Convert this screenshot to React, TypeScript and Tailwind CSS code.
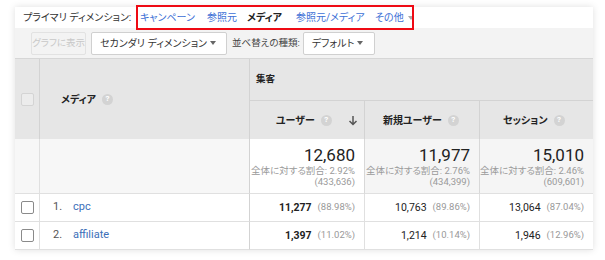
import React from 'react'

const Q = () => (
  <span className="inline-flex items-center justify-center w-[11px] h-[11px] rounded-full bg-[#d3d3d3] text-white text-[8px] font-bold leading-none ml-[6px]">?</span>
)

const Box = ({ light }: { light?: boolean }) => (
  <span className={`block w-[13px] h-[13px] rounded-[2px] border ${ light ? 'border-[#d4d4d4] bg-[#ececec]' : 'border-[#8a8a8a] bg-white' }`}/>
)

const Caret = () => <span className="inline-block ml-auto border-x-[3.5px] border-x-transparent border-t-[4px] border-t-[#666]"/>

const rows = [
  { n: '1.', name: 'cpc', v: [['11,277', '(88.98%)'], ['10,763', '(89.86%)'], ['13,064', '(87.04%)']] },
  { n: '2.', name: 'affiliate', v: [['1,397', '(11.02%)'], ['1,214', '(10.14%)'], ['1,946', '(12.96%)']] },
]

const totals = [
  ['12,680', '2.92%', '(433,636)'],
  ['11,977', '2.76%', '(434,399)'],
  ['15,010', '2.46%', '(609,601)'],
]

export default function App() {
  return (
    <div className="w-[605px] h-[260px] bg-white pt-[7px] pl-[15px] font-[Roboto,'Noto_Sans_CJK_JP',sans-serif] [font-feature-settings:'palt'] whitespace-nowrap text-[#333]">
      <div className="w-[578px] shadow-[0_0_7px_rgba(0,0,0,0.13)] bg-white">
        {/* primary dimension */}
        <div className="relative h-[21px] flex items-center pl-[8px] text-[10px]">
          <span className="w-[117px] text-[#333]">プライマリ ディメンション:</span>
          <div className="absolute left-[121px] top-[-2px] w-[278px] h-[25px] border-2 border-[#ee0a14]"/>
          <div className="flex items-center text-[#3c6fd6]">
            <span className="w-[67px]">キャンペーン</span>
            <span className="w-[40px]">参照元</span>
            <span className="w-[49px] text-[#222] font-bold">メディア</span>
            <span className="w-[79px]">参照元/メディア</span>
            <span className="flex items-center">その他<span className="ml-[4px] border-x-[3px] border-x-transparent border-t-[4px] border-t-[#aaa]"/></span>
          </div>
        </div>

        {/* toolbar */}
        <div className="h-[31px] bg-[#f3f3f3] border-b border-[#d6d6d6] flex items-center pl-[16px] text-[10px]">
          <div className="h-[23px] w-[55px] flex items-center justify-center border border-[#e2e2e2] rounded-[2px] text-[#c8c8c8] text-[9.5px]">グラフに表示</div>
          <div className="h-[23px] w-[136px] ml-[5px] pl-[8px] pr-[10px] flex items-center border border-[#d0d0d0] rounded-[2px] bg-white text-[#333]">セカンダリ ディメンション<Caret/></div>
          <span className="ml-[5px] text-[#444] text-[9.5px]">並べ替えの種類:</span>
          <div className="h-[23px] w-[72px] ml-[3px] pl-[8px] pr-[11px] flex items-center border border-[#d0d0d0] rounded-[2px] bg-white text-[#333]">デフォルト<Caret/></div>
        </div>

        {/* table */}
        <div className="grid grid-cols-[25px_210px_115px_115px_113px] grid-rows-[42px_38px_55px_28px_28px] text-[10px]">
          <div className="row-span-2 bg-[#e6e6e6] border-r border-[#d3d3d3] flex items-center justify-center"><Box light/></div>
          <div className="row-span-2 bg-[#e6e6e6] border-r border-[#d3d3d3] flex items-center pl-[21px] font-bold text-[#222]">メディア<Q/></div>
          <div className="col-span-3 bg-[#e6e6e6] border-b border-[#d3d3d3] flex items-center pl-[6px] font-bold text-[9.5px] text-[#222]">集客</div>
          <div className="bg-[#e6e6e6] border-r border-[#d3d3d3] flex items-center pl-[26px] pr-[6px] font-bold text-[#222]">
            ユーザー<Q/>
            <svg className="ml-auto" width="10" height="11" viewBox="0 0 10 11"><path d="M5 1v8M1.5 6l3.5 3.5L8.5 6" fill="none" stroke="#555" strokeWidth="1.5"/></svg>
          </div>
          <div className="bg-[#e6e6e6] border-r border-[#d3d3d3] flex items-center pl-[18px] font-bold text-[#222]">新規ユーザー<Q/></div>
          <div className="bg-[#e6e6e6] flex items-center pl-[23px] font-bold text-[#222]">セッション<Q/></div>

          <div className="bg-[#f7f7f7] border-r border-[#e0e0e0] border-b"/>
          <div className="bg-[#f7f7f7] border-r border-[#d3d3d3] border-b border-b-[#e0e0e0]"/>
          {totals.map((t, i) => (
            <div key={i} className={`${ i === 0 ? 'bg-white' : 'bg-[#f5f5f5]' } ${ i < 2 ? 'border-r border-[#d8d8d8]' : '' } border-b border-b-[#e0e0e0] flex flex-col items-end justify-center pr-[9px] leading-[11px]`}>
              <span className="text-[17px] leading-[19px] text-[#222]">{t[0]}</span>
              <span className="text-[9.5px] text-[#9a9a9a]">全体に対する割合: {t[1]}</span>
              <span className="text-[9.5px] text-[#9a9a9a]">{t[2]}</span>
            </div>
          ))}

          {rows.map((r, ri) => (
            <React.Fragment key={ri}>
              <div className="bg-white border-r border-[#e0e0e0] border-b border-b-[#e0e0e0] flex items-center justify-center"><Box/></div>
              <div className="bg-white border-r border-[#d3d3d3] border-b border-b-[#e0e0e0] flex items-center pl-[13px] text-[11px]">
                <span className="w-[20px] text-[#555]">{r.n}</span>
                <span className="text-[#3c6fb8]">{r.name}</span>
              </div>
              {r.v.map((v, i) => (
                <div key={i} className={`bg-white ${ i < 2 ? 'border-r border-[#e0e0e0]' : '' } border-b border-b-[#e0e0e0] flex items-center justify-end pr-[9px]`}>
                  <span className={`text-[10.5px] text-[#222] ${ i === 0 ? 'font-bold' : '' }`}>{v[0]}</span>
                  <span className="ml-[6px] text-[9.5px] text-[#999]">{v[1]}</span>
                </div>
              ))}
            </React.Fragment>
          ))}
        </div>
      </div>
    </div>
  )
}
